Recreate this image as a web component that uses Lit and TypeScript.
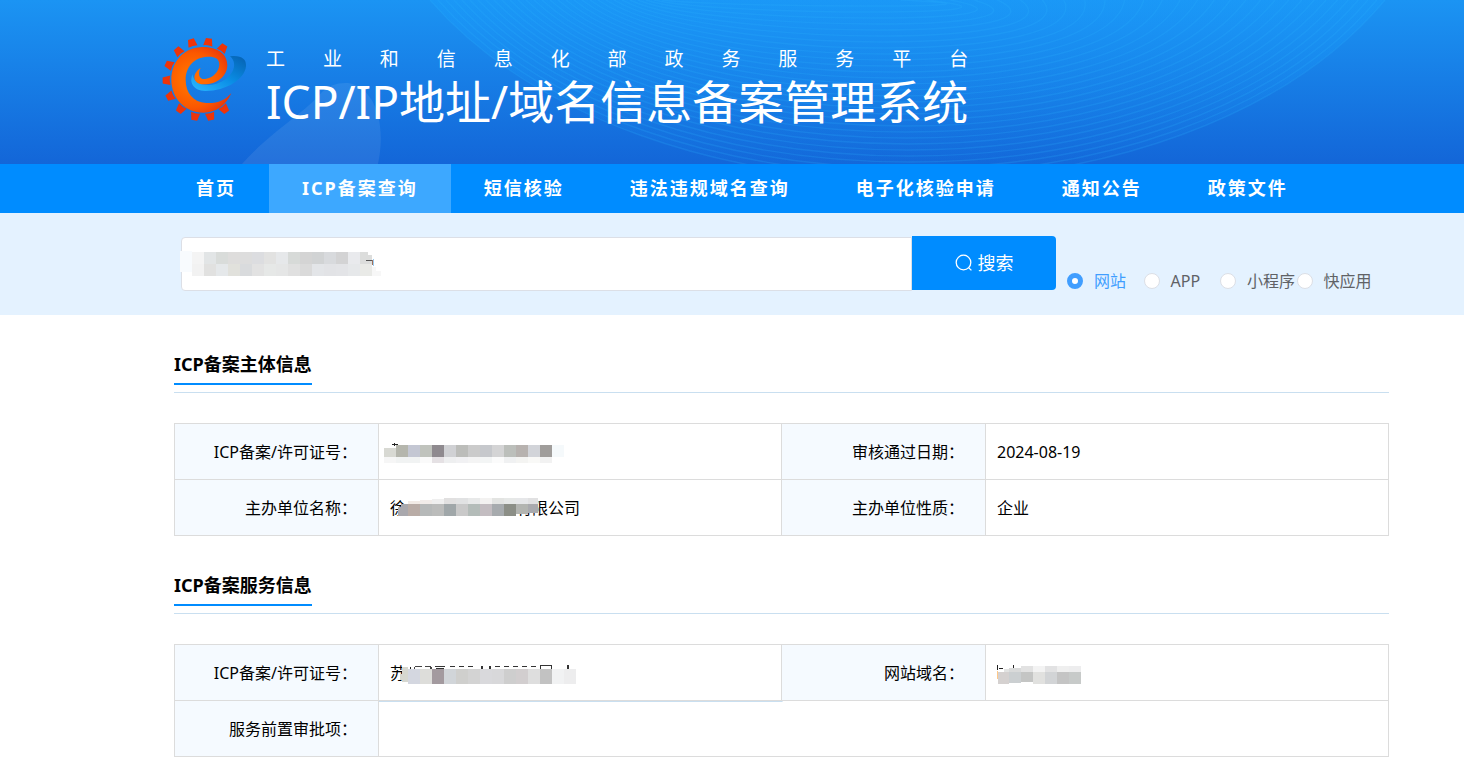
import { LitElement, html, svg, css } from "lit";
import { customElement, state } from "lit/decorators.js";

type Cell = [x: number, y: number, w: number, h: number, fill: string];

/** Lays a run of equally wide blocks side by side. */
const run = (x: number, y: number, w: number, h: number, fills: string): Cell[] =>
  fills.split(" ").map((f, i) => [x + i * w, y, w, h, "#" + f]);

const MASKS: Record<string, { w: number; h: number; cells: Cell[] }> = {
  query: {
    w: 202, h: 26,
    cells: [
      [0, 0, 12, 21, "#f8fbfe"],
      ...run(12, 1, 12, 12, "f4f4f4 e2e5e6 d9dcda dedddc dddddd dcdde0 e2e2e1 e6e8ea d7dad8 d4d4d4 d1d3d4 d8dadd d3d3d4 e9eaed"),
      [180, 1, 8, 12, "#dcdddc"], [188, 4, 4, 9, "#dcdddc"],
      ...run(12, 13, 12, 12, "f2f2f2 e1e1e0 e5e8ea e1e1dc d9dbdd e2e2e2 e6e8e7 e5e6e6 e0e0e0 dadada e3e5e8 e2e3e6 e3e4e7 e6e8ea e9eae7"),
      [192, 16, 4, 9, "#f7f7f7"], [196, 20, 5, 5, "#f7f7f7"],
      [186, 9, 6, 1, "#555555"], [192, 9, 1, 5, "#a0705a"], [193, 8, 1, 7, "#9acbf0"],
    ],
  },
  licence: {
    w: 180, h: 20,
    cells: [
      [8, 1, 6, 1, "#222222"], [10, 0, 1, 3, "#222222"],
      [0, 5, 12, 9, "#d8d9d3"],
      ...run(12, 2, 12, 12, "b5b6ad c4c7d3 c0c3bd 8f8a8f d0d1d4 bcbdba cbcbcb c6c8cc d4d4d5 bcbfbb b7b2af d2d4d9 a09d9b f5f9fb"),
      ...run(0, 14, 12, 6, "f6f6f6 f1f3f3 f1f3f3 fafafa e5e1e4 eeeff0 f1f1f3 f4f4f4 f3f5f5 fbfbfb f0f1f2 f4f4f2 f9f9f7 f2f2f2"),
    ],
  },
  company: {
    w: 140, h: 18,
    cells: [
      [10, 3, 12, 3, "#f2ebe6"], [22, 2, 12, 4, "#f1ece9"], [34, 1, 12, 5, "#efefef"],
      ...run(46, 0, 12, 6, "e1e0e0 e1e2e3 e8e9e9 f3f2f1 e3e4e2 e6e8e7 e6e7e9"),
      [130, 0, 10, 6, "#e1e1e2"],
      [0, 9, 10, 9, "#a9a8ad"], [3, 6, 7, 4, "#a9a8ad"],
      ...run(10, 6, 12, 12, "b9aca6 b6b9b9 bbbcbb a0a7a9 c9c9c9 b4bcb9 c3bdc1 a7abae 8c8f87"),
      [118, 6, 12, 10, "#b3b5b1"], [130, 6, 10, 9, "#a9aaae"],
    ],
  },
  service: {
    w: 178, h: 19,
    cells: [
      [10, 2, 1, 3, "#222222"],
      [15, 1, 7, 1, "#444444"], [14, 2, 1, 2, "#444444"], [25, 1, 6, 1, "#444444"], [30, 2, 2, 2, "#444444"],
      [35, 1, 10, 1, "#333333"], [36, 3, 8, 1, "#333333"],
      [50, 1, 5, 1, "#333333"], [59, 1, 5, 1, "#333333"], [68, 1, 5, 1, "#333333"], [81, 1, 2, 3, "#333333"],
      [89, 1, 2, 3, "#333333"], [95, 1, 5, 1, "#333333"], [104, 1, 5, 1, "#333333"], [113, 1, 5, 1, "#333333"],
      [122, 1, 5, 1, "#333333"], [131, 1, 5, 1, "#333333"], [140, 0, 12, 1, "#333333"], [140, 0, 1, 4, "#333333"],
      [151, 0, 1, 4, "#333333"], [167, 0, 2, 4, "#333333"],
      [2, 2, 6, 15, "#d6d7cf"], [0, 9, 3, 6, "#d6d7cf"],
      ...run(8, 4, 12, 15, "d4d7e0 ddddda a39a9f d1d5d9 cfcfcd d3d3d3 d9d9dc d8d8da cecece d2cecf dedede c2c2c2 f1f2f3 ededee"),
    ],
  },
  domain: {
    w: 84, h: 19,
    cells: [
      [0, 0, 1, 5, "#222222"], [2, 3, 4, 1, "#222222"], [16, 0, 1, 3, "#222222"],
      [0, 6, 1, 8, "#ffc98a"],
      [7, 4, 5, 3, "#e2e3e2"], [12, 3, 12, 4, "#d9dada"],
      ...run(24, 1, 12, 6, "e2e2e2 f3f3f3 e2e2e3 efefef ededee"),
      [1, 7, 11, 12, "#d5d1d0"], [12, 7, 12, 11, "#cbcfd1"], [24, 7, 12, 10, "#c4c5c4"],
      ...run(36, 7, 12, 12, "e1e1df d2d4d6 c4c4c4 c7cac9"),
    ],
  },
};

const mask = (name: keyof typeof MASKS) => {
  const m = MASKS[name];
  return html`<svg class="mask ${name}" width=${m.w} height=${m.h} shape-rendering="crispEdges" aria-hidden="true">
    ${m.cells.map(([x, y, w, h, f]) => svg`<rect x=${x} y=${y} width=${w} height=${h} fill=${f} />`)}
  </svg>`;
};

const TEETH = [
  [126, 54], [175, 52], [218, 70], [86, 79], [58, 120], [50, 166],
  [61, 214], [92, 252], [135, 274], [181, 274], [223, 252],
];

const NAV = ["首页", "ICP备案查询", "短信核验", "违法违规域名查询", "电子化核验申请", "通知公告", "政策文件"];
const KINDS = ["网站", "APP", "小程序", "快应用"];

@customElement("app-root")
export class AppRoot extends LitElement {
  @state() private kind = "网站";

  static styles = css`
    :host {
      display: block;
      background: #fff;
      color: #000;
      font: 16px/24px "Noto Sans", "Noto Sans CJK SC", sans-serif;
    }
    * { box-sizing: border-box; }
    .header {
      display: grid;
      align-items: start;
      background: linear-gradient(#1b94f3, #1366d8);
    }
    .waves { grid-area: 1 / 1; width: 100%; height: 164px; display: block; }
    .brand {
      grid-area: 1 / 1;
      display: flex;
      gap: 19px;
      padding: 37px 0 0 162px;
      color: #fff;
    }
    .logo { display: block; flex: none; }
    .platform {
      margin: 0;
      padding-top: 10px;
      font-size: 19px;
      line-height: 24px;
      text-align: justify;
      text-align-last: justify;
    }
    .title { margin: 0; font-size: 46px; line-height: 60px; font-weight: 400; white-space: nowrap; }
    .nav { display: flex; padding-left: 163px; background: #008cff; }
    .nav a {
      padding: 0 33px;
      color: #fff;
      font-size: 18px;
      line-height: 49px;
      font-weight: 700;
      letter-spacing: 2px;
      text-decoration: none;
      white-space: nowrap;
    }
    .nav a.active { background: #3da8ff; }
    .search {
      display: flex;
      align-items: flex-end;
      padding: 23px 75px 24px 181px;
      background: #e4f2ff;
    }
    .field { position: relative; flex: 0 1 731px; }
    .field input {
      display: block;
      width: 100%;
      height: 54px;
      padding: 0 15px;
      border: 1px solid #dcdfe6;
      border-radius: 4px 0 0 4px;
      background: #fff;
      font: inherit;
      outline: none;
    }
    .go {
      display: flex;
      align-items: center;
      justify-content: center;
      gap: 5px;
      width: 144px;
      height: 54px;
      margin-bottom: 1px;
      border: 0;
      border-radius: 0 4px 4px 0;
      background: #008cff;
      color: #fff;
      font: inherit;
      font-size: 18px;
    }
    .kinds {
      display: grid;
      grid-template-columns: repeat(4, 1fr);
      width: 306px;
      margin: 0 0 1px 11px;
      padding: 0;
      border: 0;
    }
    .kinds label {
      display: flex;
      align-items: center;
      gap: 11px;
      line-height: 18px;
      color: #606266;
      white-space: nowrap;
    }
    .kinds label.on { color: #409eff; }
    .kinds input {
      appearance: none;
      flex: none;
      width: 16px;
      height: 16px;
      margin: 0;
      border: 1px solid #dcdfe6;
      border-radius: 50%;
      background: #fff;
    }
    .kinds input:checked { border: 5px solid #409eff; }
    .main { padding: 36px 75px 27px 174px; }
    .section + .section { padding-top: 36px; }
    .heading { border-bottom: 1px solid #c9dff0; padding-bottom: 7px; }
    .heading h2 {
      width: fit-content;
      margin: 0;
      padding-bottom: 6px;
      border-bottom: 2px solid #008cff;
      font-size: 18px;
      line-height: 26px;
      font-weight: 700;
    }
    table {
      width: 100%;
      margin-top: 30px;
      border-collapse: collapse;
      table-layout: fixed;
      border: 1px solid #dcdcdc;
    }
    .label { width: 204px; }
    th, td { height: 56px; padding: 0 11px; text-align: left; font-weight: 400; border: 1px solid #dcdcdc; }
    th { padding-right: 21px; text-align: right; background: #f5faff; }
    tr + tr > * { border-top-color: #c9dff0; }
    .wide {
      background: linear-gradient(#c9dff0, #c9dff0) 0 0 / 40% 1px no-repeat;
    }
    .value { position: relative; height: 24px; white-space: nowrap; }
    .hidden { display: inline-block; width: 110px; }
    .mask { position: absolute; display: block; }
    .query { left: -1px; top: 14px; }
    .licence { left: -6px; top: 3px; }
    .company { left: 8px; top: 2px; }
    .service { left: 10px; top: 4px; }
    .domain { left: 0; top: 4px; }
  `;

  private waves() {
    const lines = Array.from({ length: 30 }, (_, i) => i);
    const curve = (i: number) =>
      `M${430 + i * 8} 0C${640 + i * 3} ${240 - i * 8} ${1185 - i * 4} ${240 - i * 8} ${1385 - i * 8 - i * i * 0.3} 0`;
    return html`<svg class="waves" viewBox="0 0 1464 164" preserveAspectRatio="xMidYMin slice" aria-hidden="true">
      <defs>
        <linearGradient id="glow" x1="0" y1="0" x2="0" y2="1">
          <stop offset="0" stop-color="#19a0ff" stop-opacity=".35" /><stop offset="1" stop-color="#19a0ff" stop-opacity="0" />
        </linearGradient>
      </defs>
      <path d="M242 164C270 132 306 112 322 92Q332 82 348 83C374 87 387 122 378 164Z" fill="#fff" opacity=".08" />
      <path d=${curve(0)} fill="url(#glow)" />
      <g fill="none" stroke="#2fb4ff" stroke-opacity=".2" stroke-width="1.4">
        ${lines.map((i) => svg`<path d=${curve(i)} />`)}
      </g>
    </svg>`;
  }

  private logo() {
    return html`<svg class="logo" width="85" height="86" viewBox="36 36 255 258" role="img" aria-label="工业和信息化部">
      <defs>
        <radialGradient id="flame" gradientUnits="userSpaceOnUse" cx="130" cy="165" r="125">
          <stop offset=".3" stop-color="#ff6c00" /><stop offset=".65" stop-color="#fb5800" /><stop offset="1" stop-color="#e5340d" />
        </radialGradient>
        <linearGradient id="swoosh" x1="0" y1="1" x2="1" y2="0">
          <stop offset="0" stop-color="#2bb8ff" /><stop offset=".5" stop-color="#0a8ee6" /><stop offset="1" stop-color="#0560b0" />
        </linearGradient>
      </defs>
      ${TEETH.map(([x, y]) => {
        const turn = Math.round((Math.atan2(y - 164, x - 157) * 180) / Math.PI + 90);
        return svg`<path d="M-9 -12H9L14 11Q0 7 -14 11Z" transform="translate(${x} ${y}) rotate(${turn})" fill="#ee3409" />`;
      })}
      <path d="M240 94C272 90 290 101 288 124C284 164 226 199 165 198C132 197 116 174 128 148C130 176 162 186 200 176C246 162 268 118 240 94Z" fill="url(#swoosh)" />
      <path d="M244 204C228 242 198 262 160 263C106 263 64 220 64 164C64 108 104 66 158 66C202 66 232 86 232 120C232 156 196 180 160 178C128 176 124 148 152 128C142 148 148 164 166 162C190 160 208 138 208 118C208 100 194 94 172 95C132 97 107 126 107 164C107 204 130 231 168 234C202 236 226 226 244 204Z" fill="url(#flame)" />
    </svg>`;
  }

  render() {
    return html`
      <header class="header">
        ${this.waves()}
        <div class="brand">
          ${this.logo()}
          <div>
            <p class="platform">工业和信息化部政务服务平台</p>
            <h1 class="title">ICP/IP地址/域名信息备案管理系统</h1>
          </div>
        </div>
      </header>
      <nav class="nav">
        ${NAV.map((n, i) => html`<a href="#" class=${i === 1 ? "active" : ""}>${n}</a>`)}
      </nav>
      <form class="search" @submit=${(e: Event) => e.preventDefault()}>
        <div class="field"><input type="text" aria-label="搜索" />${mask("query")}</div>
        <button class="go">
          <svg width="18" height="18" viewBox="0 0 18 18" fill="none" stroke="#fff" stroke-width="1.3" aria-hidden="true">
            <circle cx="8.5" cy="8.5" r="7.3" /><path d="M13.6 13.6L16.4 16.4" />
          </svg>
          <span>搜索</span>
        </button>
        <fieldset class="kinds">
          ${KINDS.map((k) => html`<label class=${k === this.kind ? "on" : ""}>
            <input type="radio" name="kind" .checked=${k === this.kind} @change=${() => (this.kind = k)} />${k}
          </label>`)}
        </fieldset>
      </form>
      <main class="main">
        <section class="section">
          <div class="heading"><h2>ICP备案主体信息</h2></div>
          <table>
            <colgroup><col class="label" /><col /><col class="label" /><col /></colgroup>
            <tbody>
              <tr>
                <th scope="row">ICP备案/许可证号：</th>
                <td><div class="value">${mask("licence")}</div></td>
                <th scope="row">审核通过日期：</th>
                <td>2024-08-19</td>
              </tr>
              <tr>
                <th scope="row">主办单位名称：</th>
                <td><div class="value">徐<span class="hidden"></span>有限公司${mask("company")}</div></td>
                <th scope="row">主办单位性质：</th>
                <td>企业</td>
              </tr>
            </tbody>
          </table>
        </section>
        <section class="section">
          <div class="heading"><h2>ICP备案服务信息</h2></div>
          <table>
            <colgroup><col class="label" /><col /><col class="label" /><col /></colgroup>
            <tbody>
              <tr>
                <th scope="row">ICP备案/许可证号：</th>
                <td><div class="value">苏${mask("service")}</div></td>
                <th scope="row">网站域名：</th>
                <td><div class="value">${mask("domain")}</div></td>
              </tr>
              <tr>
                <th scope="row">服务前置审批项：</th>
                <td class="wide" colspan="3"></td>
              </tr>
            </tbody>
          </table>
        </section>
      </main>
    `;
  }
}
